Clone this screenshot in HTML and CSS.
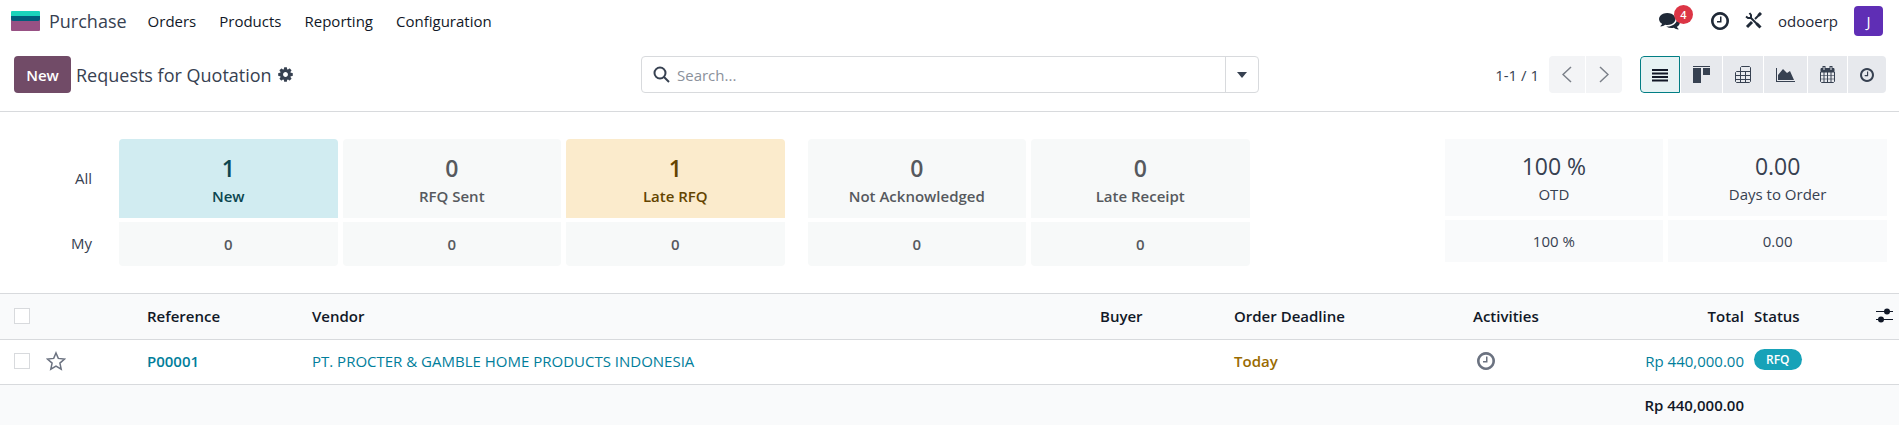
FILE: index.html
```
<!DOCTYPE html>
<html lang="en">
<head>
    <meta charset="UTF-8">
    <meta name="viewport" content="width=device-width, initial-scale=1.0">
    <title>Requests for Quotation</title>
    <link rel="stylesheet" href="styles.css">
</head>
<body>
    <svg class="sprite" aria-hidden="true">
        <symbol id="clock" viewBox="128 128 1536 1536">
            <path d="M1024 544v448q0 14-9 23t-23 9h-320q-14 0-23-9t-9-23v-64q0-14 9-23t23-9h224v-352q0-14 9-23t23-9h64q14 0 23 9t9 23zm416 352q0-148-73-273t-198-198-273-73-273 73-198 198-73 273 73 273 198 198 273 73 273-73 198-198 73-273zm224 0q0 209-103 385.5t-279.5 279.5-385.5 103-385.5-103-279.5-279.5-103-385.5 103-385.5 279.5-279.5 385.5-103 385.5 103 279.5 279.5 103 385.5z"/>
        </symbol>
    </svg>

    <nav class="navbar">
        <a class="brand" href="#">
            <svg width="29" height="20" viewBox="0 0 29 20">
                <rect y="4" width="29" height="16" rx="1" fill="#985184"/>
                <path d="M0 4h29v4q0 2-2 2H2q-2 0-2-2z" fill="#005e7a"/>
                <path d="M1 0h27q1 0 1 1v4H0V1q0-1 1-1z" fill="#1ad3bb"/>
            </svg>
            <span>Purchase</span>
        </a>
        <div class="menu">
            <a href="#">Orders</a>
            <a href="#">Products</a>
            <a href="#">Reporting</a>
            <a href="#">Configuration</a>
        </div>
        <div class="systray">
            <button type="button" class="messages" aria-label="Messages">
                <svg width="21" height="21" viewBox="0 0 1792 1792" fill="currentColor"><path d="M1408 768q0 139-94 257t-256.500 186.500-353.500 68.500q-86 0-176-16-124 88-278 128-36 9-86 16h-3q-11 0-20.500-8t-11.500-21q-1-3-1-6.500t.5-6.500 2-6l2.500-5 3.500-5.500 4-5 4.500-5 4-4.500q5-6 23-25t26-29.500 22.500-29 25-38.500 20.500-44q-124-72-195-177t-71-224q0-139 94-257t256.500-186.500 353.500-68.500 353.500 68.500 256.500 186.500 94 257zm384 256q0 120-71 224.500t-195 176.500q10 24 20.500 44t25 38.500 22.500 29 26 29.500 23 25q1 1 4 4.500t4.500 5 4 5 3.500 5.500l2.500 5 2 6 .5 6.500-1 6.500q-3 14-13 22t-22 7q-50-7-86-16-154-40-278-128-90 16-176 16-271 0-472-132 58 4 88 4 161 0 309-45t264-129q125-92 192-212t67-254q0-77-23-152 129 71 204 178t75 230z"/></svg>
                <span class="counter">4</span>
            </button>
            <button type="button" aria-label="Activities">
                <svg width="18" height="18" fill="currentColor"><use href="#clock"/></svg>
            </button>
            <button type="button" aria-label="Developer tools">
                <svg width="17" height="17" viewBox="0 0 17 17" fill="none" stroke="currentColor">
                    <path d="M5 5l9 9" stroke-width="2"/>
                    <path d="M11.500 11.500l4 4" stroke-width="3"/>
                    <path d="M1 4.500l2 1.500h3V3L4.500 1" stroke-width="2"/>
                    <path d="M2 15l5-5" stroke-width="3"/>
                    <path d="M10 7l5-5" stroke-width="2"/>
                    <path d="M13.500 3.500L16 1" stroke-width="3"/>
                </svg>
            </button>
            <a class="company" href="#">odooerp</a>
            <button type="button" class="avatar">J</button>
        </div>
    </nav>

    <header class="control-panel">
        <div class="breadcrumb">
            <button type="button" class="btn-new">New</button>
            <h1>Requests for Quotation</h1>
            <button type="button" aria-label="Actions">
                <svg width="17" height="17" viewBox="0 0 1792 1792" fill="currentColor"><path d="M1152 896q0-106-75-181t-181-75-181 75-75 181 75 181 181 75 181-75 75-181zm512-109v222q0 12-8 23t-20 13l-185 28q-19 54-39 91 35 50 107 138 10 12 10 25t-9 23q-27 37-99 108t-94 71q-12 0-26-9l-138-108q-44 23-91 38-16 136-29 186-7 28-36 28h-222q-14 0-24.500-8.500t-11.500-21.500l-28-184q-49-16-90-37l-141 107q-10 9-25 9-14 0-25-11-126-114-165-168-7-10-7-23 0-12 8-23 15-21 51-66.500t54-70.500q-27-50-41-99l-183-27q-13-2-21-12.500t-8-23.500v-222q0-12 8-23t19-13l186-28q14-46 39-92-40-57-107-138-10-12-10-24 0-10 9-23 26-36 98.500-107.500t94.500-71.500q13 0 26 10l138 107q44-23 91-38 16-136 29-186 7-28 36-28h222q14 0 24.500 8.500t11.500 21.500l28 184q49 16 90 37l142-107q9-9 24-9 13 0 25 10 129 119 165 170 7 8 7 22 0 12-8 23-15 21-51 66.500t-54 70.500q26 50 41 98l183 28q13 2 21 12.500t8 23.500z"/></svg>
            </button>
        </div>

        <form class="search" role="search">
            <label for="search" aria-label="Search">
                <svg width="17" height="17" viewBox="0 0 17 17" fill="none" stroke="currentColor" stroke-width="2"><circle cx="7" cy="7" r="5.500"/><path d="M11 11l5 5"/></svg>
            </label>
            <input type="text" id="search" placeholder="Search...">
            <button type="button" aria-label="Filters">
                <svg width="10" height="6" viewBox="0 0 10 6" fill="currentColor"><path d="M0 0h10L5 6z"/></svg>
            </button>
        </form>

        <div class="panel-right">
            <span class="pager-text">1-1 / 1</span>
            <div class="pager">
                <button type="button" aria-label="Previous">
                    <svg width="10" height="17" viewBox="0 0 10 17" fill="none" stroke="currentColor" stroke-width="1.500"><path d="M9 1L1 8.500 9 16"/></svg>
                </button>
                <button type="button" aria-label="Next">
                    <svg width="10" height="17" viewBox="0 0 10 17" fill="none" stroke="currentColor" stroke-width="1.500"><path d="M1 1l8 7.500L1 16"/></svg>
                </button>
            </div>
            <div class="views">
                <button type="button" class="active" aria-label="List">
                    <svg width="16" height="14" viewBox="0 0 16 14" fill="currentColor"><path d="M0 1h16v2H0zM0 4.500h16v2H0zM0 8h16v2H0zM0 11.500h16v2H0z"/></svg>
                </button>
                <button type="button" aria-label="Kanban">
                    <svg width="17" height="17" viewBox="0 0 17 17" fill="currentColor"><path d="M0 0h17v1H0zM0 2h8v15H0zM10 2h7v7h-7z"/></svg>
                </button>
                <button type="button" aria-label="Pivot">
                    <svg width="16" height="17" viewBox="0 0 16 17" fill="none" stroke="currentColor"><path d="M5.500 5.500v-4l1-1h8l1 1v14l-1 1h-13l-1-1v-9l1-1h14M.5 9.500h15M.5 13.500h15M5.500 5.500v11M10.500 5.500v11"/></svg>
                </button>
                <button type="button" aria-label="Graph">
                    <svg width="19" height="15" viewBox="0 0 19 15" fill="currentColor"><path d="M0 1h1v13h18v1H0zM2 13V8l5-6 4 4 3-2 4 9z"/></svg>
                </button>
                <button type="button" aria-label="Calendar">
                    <svg width="15" height="17" viewBox="0 0 15 17" fill="none" stroke="currentColor">
                        <path d="M1 2.500h13V6H1z" fill="currentColor"/>
                        <path d="M.5 6v9.500l1 1h12l1-1V6M4 6v10.500M7.500 6v10.500M11 6v10.500"/>
                        <path d="M.5 9.500h14M.5 13h14" stroke-opacity=".6"/>
                        <path d="M4 0v4M11 0v4" stroke-width="3"/>
                        <path d="M4 1v3M11 1v3" stroke="#e7e9ed"/>
                    </svg>
                </button>
                <button type="button" aria-label="Activity">
                    <svg width="14" height="14" fill="currentColor"><use href="#clock"/></svg>
                </button>
            </div>
        </div>
    </header>

    <section class="dashboard">
        <div class="counts">
            <span class="row-label">All</span>
            <a class="card top info" href="#"><b>1</b>New</a>
            <a class="card top" href="#"><b>0</b>RFQ Sent</a>
            <a class="card top warning" href="#"><b>1</b>Late RFQ</a>
            <span></span>
            <a class="card top" href="#"><b>0</b>Not Acknowledged</a>
            <a class="card top" href="#"><b>0</b>Late Receipt</a>

            <span class="row-label">My</span>
            <a class="card bottom" href="#">0</a>
            <a class="card bottom" href="#">0</a>
            <a class="card bottom" href="#">0</a>
            <span></span>
            <a class="card bottom" href="#">0</a>
            <a class="card bottom" href="#">0</a>
        </div>
        <div class="stats">
            <div class="stat"><b>100 %</b>OTD</div>
            <div class="stat"><b>0.00</b>Days to Order</div>
            <div class="stat small">100 %</div>
            <div class="stat small">0.00</div>
        </div>
    </section>

    <table class="list">
        <colgroup>
            <col class="c-select">
            <col class="c-star">
            <col class="c-reference">
            <col>
            <col class="c-buyer">
            <col class="c-deadline">
            <col class="c-activities">
            <col class="c-total">
            <col class="c-status">
            <col class="c-options">
        </colgroup>
        <thead>
            <tr>
                <th class="select"><input type="checkbox" aria-label="Select all"></th>
                <th></th>
                <th>Reference</th>
                <th>Vendor</th>
                <th>Buyer</th>
                <th>Order Deadline</th>
                <th>Activities</th>
                <th class="number">Total</th>
                <th>Status</th>
                <th>
                    <button type="button" aria-label="Optional columns">
                        <svg width="17" height="15" viewBox="0 0 17 15" fill="currentColor"><path d="M0 3h17v1H0zM0 11h17v1H0z"/><circle cx="11" cy="3.500" r="3"/><circle cx="5" cy="11.500" r="3"/></svg>
                    </button>
                </th>
            </tr>
        </thead>
        <tbody>
            <tr>
                <td class="select"><input type="checkbox" aria-label="Select P00001"></td>
                <td>
                    <button type="button" class="star" aria-label="Priority">
                        <svg width="20" height="20" viewBox="0 0 20 20" fill="none" stroke="currentColor" stroke-width="1.500"><path d="M10 2l2.300 5.400 6.200.6-4.600 4.100 1.300 6L10 15l-5.200 3.100 1.300-6L1.500 8l6.200-.6z"/></svg>
                    </button>
                </td>
                <td><a class="reference" href="#">P00001</a></td>
                <td><a href="#">PT. PROCTER &amp; GAMBLE HOME PRODUCTS INDONESIA</a></td>
                <td></td>
                <td class="today">Today</td>
                <td>
                    <button type="button" class="activity" aria-label="Schedule activity">
                        <svg width="18" height="18" fill="currentColor"><use href="#clock"/></svg>
                    </button>
                </td>
                <td class="number amount">Rp 440,000.00</td>
                <td><span class="badge">RFQ</span></td>
                <td></td>
            </tr>
        </tbody>
        <tfoot>
            <tr>
                <td colspan="7"></td>
                <td class="number">Rp 440,000.00</td>
                <td colspan="2"></td>
            </tr>
        </tfoot>
    </table>
</body>
</html>
```
FILE: styles.css
```
* {
    box-sizing: border-box;
}

body {
    margin: 0;
    min-height: 100vh;
    font-family: "Open Sans", "Noto Sans", sans-serif;
    font-size: 15px;
    line-height: 24px;
    color: #374151;
    background-color: #fff;
}

a {
    color: inherit;
    text-decoration: none;
}

button {
    display: flex;
    align-items: center;
    justify-content: center;
    padding: 0;
    border: none;
    background: none;
    color: inherit;
    font: inherit;
    cursor: pointer;
}

svg {
    display: block;
}

.sprite {
    display: none;
}

/* Navbar */
.navbar {
    display: flex;
    align-items: center;
    height: 41px;
    padding: 0 16px 0 11px;
    color: #111827;
}

.brand {
    display: flex;
    align-items: center;
    gap: 9px;
    font-size: 18px;
    color: #374151;
}

.menu {
    display: flex;
    gap: 23px;
    margin-left: 21px;
}

.systray {
    display: flex;
    align-items: center;
    gap: 16px;
    margin-left: auto;
    color: #1f2937;
}

.messages {
    position: relative;
    margin-right: 15px;
}

.counter {
    position: absolute;
    left: 15px;
    top: -5px;
    width: 19px;
    height: 19px;
    border-radius: 50%;
    background-color: #dc3545;
    color: #fff;
    font-size: 11px;
    font-weight: 600;
    line-height: 19px;
}

.avatar {
    width: 29px;
    height: 30px;
    border-radius: 4px;
    background-color: #5f2eb5;
    color: #fff;
}

/* Control panel */
.control-panel {
    display: grid;
    grid-template-columns: 1fr 618px 1fr;
    align-items: center;
    padding: 15px 13px 18px 14px;
    border-bottom: 1px solid #d8dadd;
}

.breadcrumb {
    display: flex;
    align-items: center;
    gap: 5px;
}

.btn-new {
    width: 57px;
    height: 37px;
    border-radius: 4px;
    background-color: #714b67;
    color: #fff;
    font-weight: 600;
}

h1 {
    margin: 0;
    font-size: 18px;
    font-weight: 400;
}

.search {
    display: flex;
    align-items: center;
    height: 37px;
    border: 1px solid #d8dadd;
    border-radius: 4px;
}

.search label {
    padding: 0 7px 0 11px;
}

.search input {
    flex: 1;
    padding: 0;
    border: none;
    outline: none;
    font: inherit;
}

.search input::placeholder {
    color: #8b919b;
}

.search button {
    width: 33px;
    height: 100%;
    border-left: 1px solid #d8dadd;
}

.panel-right {
    display: flex;
    align-items: center;
    justify-content: flex-end;
}

.pager,
.views {
    display: flex;
    gap: 1px;
    overflow: hidden;
    border-radius: 4px;
}

.pager {
    margin: 0 18px 0 10px;
}

.pager button {
    width: 36px;
    height: 37px;
    background-color: #f3f4f6;
    color: #7b8089;
}

.views button {
    height: 37px;
    padding: 0 12px;
    background-color: #e7e9ed;
}

.views .active {
    padding: 0 11px;
    border: 1px solid #017e84;
    border-radius: 4px 0 0 4px;
    background-color: #e6f2f3;
    color: #111827;
}

/* Dashboard */
.dashboard {
    display: flex;
    justify-content: space-between;
    align-items: flex-start;
    padding: 27px 12px;
}

.counts,
.stats {
    display: grid;
    gap: 4px 5px;
}

.counts {
    width: 66%;
    grid-template-columns: 102px repeat(3, 1fr) 13px repeat(2, 1fr);
}

.stats {
    width: 23.6%;
    grid-template-columns: 1fr 1fr;
}

.row-label {
    align-self: center;
    padding: 0 22px 2px 0;
    text-align: right;
}

.card,
.stat {
    padding: 13px 8px 10px;
    background-color: #f7f9f9;
    color: #56595e;
    font-weight: 600;
    text-align: center;
}

.card b,
.stat b {
    display: block;
    font-size: 23px;
    font-weight: inherit;
    line-height: 32px;
}

.top {
    border-radius: 4px 4px 0 0;
}

.bottom {
    padding: 10px 8px;
    border-radius: 0 0 4px 4px;
}

.info {
    background-color: #d1ecf1;
    color: #0b4650;
}

.warning {
    background-color: #fbebcc;
    color: #634400;
}

.stat {
    padding: 11px 8px 10px;
    background-color: #f9fafb;
    color: #374151;
    font-weight: 400;
}

.small {
    padding: 9px 8px;
}

/* List */
.list {
    width: 100%;
    border-collapse: collapse;
    table-layout: fixed;
    border-top: 1px solid #d8dadd;
}

.list tr {
    height: 45px;
    border-bottom: 1px solid #d8dadd;
}

.list thead tr {
    height: 46px;
}

.list th,
.list td {
    padding: 0 5px 2px;
    text-align: left;
    white-space: nowrap;
}

.list th {
    color: #111827;
    font-weight: 600;
}

.list thead,
.list tfoot {
    background-color: #f9fafb;
}

.list tfoot tr {
    height: 41px;
    border-bottom: none;
}

.list tfoot td {
    padding-bottom: 0;
    color: #111827;
    font-weight: 600;
}

.list .select {
    padding-left: 14px;
}

.list .number {
    text-align: right;
}

.list a,
.list .amount {
    color: #017e9b;
}

.list .reference {
    font-weight: 600;
}

.list .today {
    color: #9a6b01;
    font-weight: 600;
}

.list input {
    display: block;
    width: 16px;
    height: 16px;
    margin: 0;
    appearance: none;
    border: 1px solid #d8dadd;
    background-color: #fff;
}

.c-select {
    width: 41px;
}

.c-star {
    width: 101px;
}

.c-reference {
    width: 165px;
}

.c-buyer {
    width: 134px;
}

.c-deadline {
    width: 239px;
}

.c-activities {
    width: 130px;
}

.c-total {
    width: 151px;
}

.c-status {
    width: 122px;
}

.c-options {
    width: 28px;
}

.star,
.activity {
    color: #6b7280;
}

.activity {
    margin-left: 4px;
}

.badge {
    display: block;
    width: fit-content;
    margin-bottom: 3px;
    padding: 0 12px;
    border-radius: 11px;
    background-color: #17a2b8;
    color: #fff;
    font-size: 12px;
    font-weight: 600;
    line-height: 21px;
}
```
